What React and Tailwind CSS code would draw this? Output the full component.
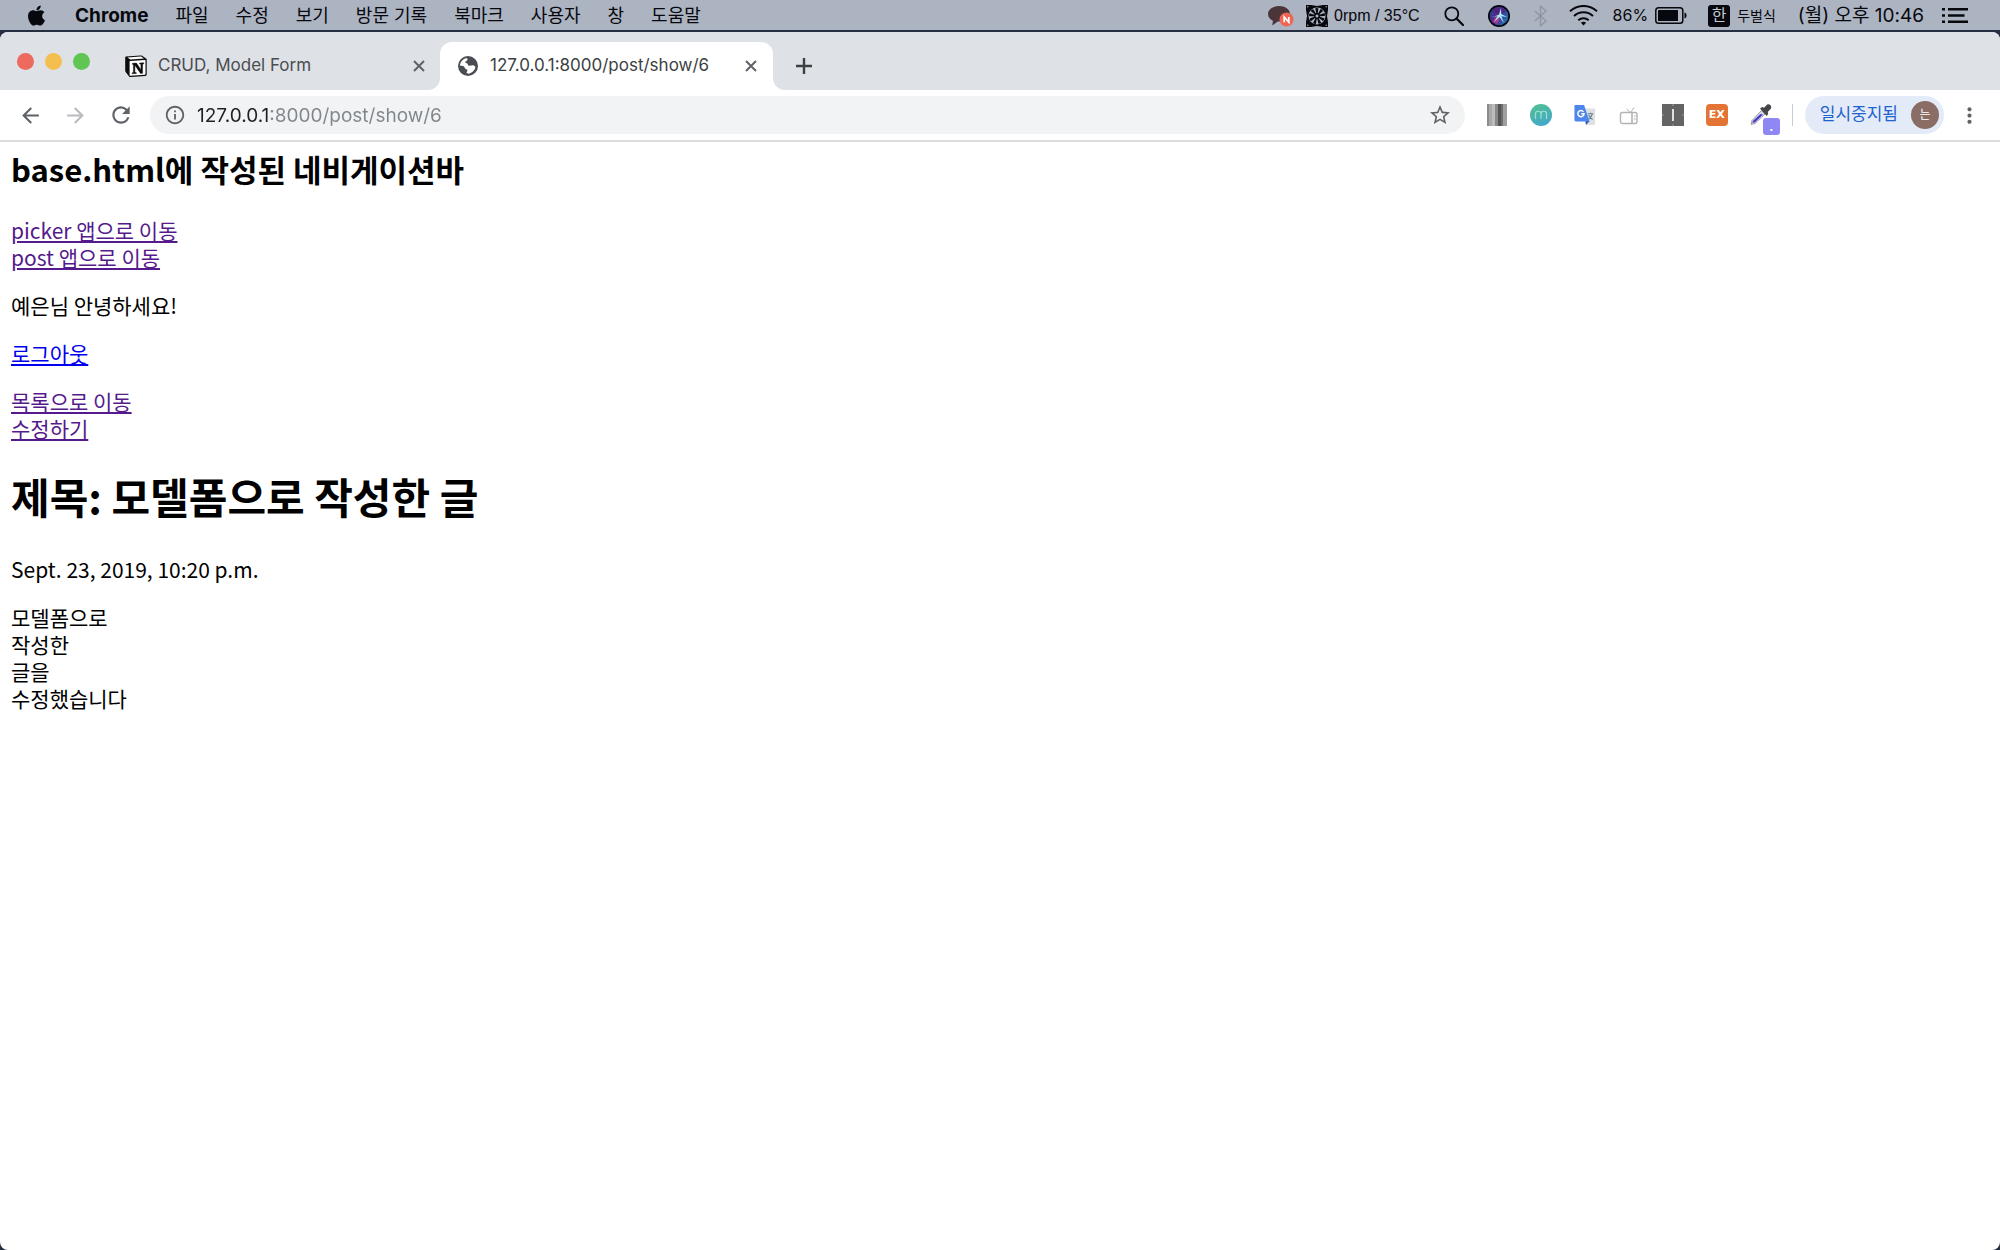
import { FaApple } from "react-icons/fa";
import { MdArrowBack, MdArrowForward, MdRefresh, MdInfoOutline, MdStarBorder, MdMoreVert } from "react-icons/md";

const UI = "font-[Inter,'Noto_Sans_CJK_KR',sans-serif]";
const menus = ["파일", "수정", "보기", "방문 기록", "북마크", "사용자", "창", "도움말"];

function KakaoIcon() {
  return (
    <svg width="26" height="22" viewBox="0 0 26 22" aria-hidden="true">
      <path d="M11 1C5 1 0 4.400 0 9c0 3 1.900 5.300 4.900 6.700L4.300 20.500l5.500-4H11c6 0 11-3.300 11-7.700S17 1 11 1z" fill="#4c3539" />
      <circle cx="18.500" cy="14.500" r="7" fill="#ee6553" />
      <path d="M16.200 17.200v-5.200l4.600 5.200v-5.200" stroke="#fff" strokeWidth="1.700" fill="none" />
    </svg>
  );
}

function FanIcon() {
  const blades = [0, 40, 80, 120, 160, 200, 240, 280, 320];
  return (
    <svg width="22" height="22" viewBox="0 0 22 22" aria-hidden="true">
      <path d="M0 0h5l6 1 6-1h5v5l-1 6 1 6v5h-5l-6-1-6 1H0v-5l1-6-1-6z" fill="#07080d" />
      <circle cx="11" cy="11" r="8.500" fill="#b0b6c3" />
      {blades.map((a) => (
        <path key={a} d="M10.400 9 L9.300 3.200 Q11 2.600 12.400 3.400 L11.600 9z" fill="#07080d" transform={`rotate(${a} 11 11)`} />
      ))}
      <circle cx="11" cy="11" r="3" fill="#07080d" />
      <circle cx="11" cy="11" r="1.500" fill="#b0b6c3" />
      <circle cx="1.800" cy="1.800" r="0.700" fill="#aab0bd" />
      <circle cx="20.200" cy="1.800" r="0.700" fill="#aab0bd" />
      <circle cx="1.800" cy="20.200" r="0.700" fill="#aab0bd" />
      <circle cx="20.200" cy="20.200" r="0.700" fill="#aab0bd" />
    </svg>
  );
}

function SearchIcon() {
  return (
    <svg width="20" height="20" viewBox="0 0 20 20" aria-hidden="true">
      <circle cx="7.800" cy="7.800" r="6.500" fill="none" stroke="#07080d" strokeWidth="1.800" />
      <path d="M12.500 12.500 19 19" stroke="#07080d" strokeWidth="2.200" strokeLinecap="round" />
    </svg>
  );
}

function SiriIcon() {
  return (
    <svg width="22" height="22" viewBox="0 0 22 22" aria-hidden="true">
      <defs>
        <linearGradient id="siri" x1="0" y1="0.200" x2="1" y2="0.800">
          <stop offset="0" stopColor="#174a8c" />
          <stop offset="0.350" stopColor="#5a2a8c" />
          <stop offset="0.600" stopColor="#3a3f9e" />
          <stop offset="1" stopColor="#1f7fa6" />
        </linearGradient>
      </defs>
      <circle cx="11" cy="11" r="11" fill="#05060f" />
      <circle cx="11" cy="11" r="9.300" fill="url(#siri)" />
      <path d="M4 5c5-4 11-3 14 1l-7 5z" fill="#4b1f7a" opacity="0.700" />
      <path d="M5 17c1-4 3-6 6-6 1 3 0 6-2 8z" fill="#c13a90" opacity="0.800" />
      <path d="M3 12c4-.8 6-1.200 8-2.500L13 3l.3 6 5.700 3-5.600-.8 2.600 6.800-4.500-6-5.500 5 3.500-5.800z" fill="#a8e9f5" />
    </svg>
  );
}

function BluetoothIcon() {
  return (
    <svg width="14" height="22" viewBox="0 0 14 22" aria-hidden="true">
      <path d="M1 6l11 10-5.500 5V1L12 6 1 16" fill="none" stroke="#8d939f" strokeWidth="1.200" />
    </svg>
  );
}

function WifiIcon() {
  return (
    <svg width="29" height="21" viewBox="0 0 29 21" fill="none" stroke="#07080d" strokeWidth="2" aria-hidden="true">
      <path d="M1 6.300C9-.8 20-.8 28 6.300M5 11c5.500-5 13.500-5 19 0M9.300 15.300c3-2.700 7.400-2.700 10.400 0" />
      <path d="M14.500 20.500l-2.600-2.800c1.500-1.300 3.700-1.300 5.200 0z" fill="#07080d" stroke="none" />
    </svg>
  );
}

function BatteryIcon() {
  return (
    <svg width="32" height="17" viewBox="0 0 32 17" aria-hidden="true">
      <rect x="0.800" y="0.800" width="27" height="15.400" rx="2.800" fill="none" stroke="#07080d" strokeWidth="1.500" />
      <rect x="3" y="3" width="20" height="11" rx="0.600" fill="#07080d" />
      <path d="M29.500 5.500c1.600.5 2 1.600 2 3s-.4 2.500-2 3z" fill="#07080d" />
    </svg>
  );
}

function ListIcon() {
  return (
    <svg width="26" height="15" viewBox="0 0 26 15" fill="#07080d" aria-hidden="true">
      <path d="M0 0h3v2.400H0zM0 6.300h3v2.400H0zM0 12.600h3V15H0zM6 0h20v2.400H6zM6 6.300h16.500v2.400H6zM6 12.600h20V15H6z" />
    </svg>
  );
}

function NotionIcon() {
  return (
    <svg width="22" height="22" viewBox="0 0 22 22" aria-hidden="true">
      <path d="M.8 1.500 15.500.5c.8 0 1.300.1 2 .6l3.500 2.500c.6.400.7.700.7 1.400v14.500c0 .9-.4 1.400-1.400 1.500l-14.600 1c-.8 0-1.300-.1-1.800-.8L1 17.500c-.5-.7-.8-1.200-.8-2V3c0-.8.2-1.400.6-1.500z" fill="#0b0b0b" />
      <path d="M2.500 2.500 15.400 1.600c.6 0 .9 0 1.400.4L19 3.500 5.300 4.400z" fill="#fff" />
      <path d="M5 5.900 19.800 5c.5 0 .7.200.7.700v13.200c0 .5-.2.800-.8.900L5.500 20.700c-.6 0-.9-.2-.9-.8V6.600c0-.4.100-.7.400-.7z" fill="#fff" />
      <path d="M7.500 8.300l4-.2 4.400 6.600V9.300l-1.300-.2V8l4.200-.2v1l-1.200.4v9.100l-2 .3-5.700-8.300v7.000l1.400.300v1l-4.200.2v-1l1.300-.4V9.500l-1.100-.2z" fill="#0b0b0b" stroke="#0b0b0b" strokeWidth="0.400" />
    </svg>
  );
}

function GlobeIcon() {
  return (
    <svg width="20" height="20" viewBox="0 0 20 20" aria-hidden="true">
      <circle cx="10" cy="10" r="10" fill="#4a4e53" />
      <path d="M8.200 2.200c1.700 0 1.500 1.200 1 2-.5.900-1.900.9-1.900 2 0 1 1.300.9 2 1.300.9.600.2 1.700 1.500 2.200 1.500.5 2.700-.6 4-.4 1.500.2 2.600 1.200 2.600 2.200-.9 3-3.400 5.500-6.600 6.200-1 .2-2.200-.1-2.200-1.100 0-1 .9-1.300.8-2.300-.1-1-1.300-1-2.100-1.600-.8-.600-.6-1.900-1.600-2.400C4.600 9.800 3.200 9.900 2 9.700 2.100 6 4.600 2.900 8.200 2.200z" fill="#fff" />
    </svg>
  );
}

function CloseIcon() {
  return (
    <svg width="12" height="12" viewBox="0 0 12 12" stroke="#5f6368" strokeWidth="2" aria-hidden="true">
      <path d="M1 1l10 10M11 1 1 11" />
    </svg>
  );
}

function PlusIcon() {
  return (
    <svg width="18" height="18" viewBox="0 0 18 18" stroke="#3c4043" strokeWidth="2.400" aria-hidden="true">
      <path d="M9 1v16M1 9h16" />
    </svg>
  );
}

function BarcodeIcon() {
  return (
    <svg width="22" height="22" viewBox="0 0 22 22" aria-hidden="true">
      <rect x="1" width="2" height="22" fill="#8b8b8b" />
      <rect x="3" width="3" height="22" fill="#a9a9a9" />
      <rect x="6" width="3" height="22" fill="#bdbdbd" />
      <rect x="9" width="3" height="22" fill="#8a8a8a" />
      <rect x="12" width="3" height="22" fill="#555" />
      <rect x="15" width="2" height="22" fill="#6f6f6f" />
      <rect x="17" width="4" height="22" fill="#a0a0a0" />
    </svg>
  );
}

function MomentumIcon() {
  return (
    <svg width="22" height="22" viewBox="0 0 22 22" aria-hidden="true">
      <defs>
        <linearGradient id="mint" x1="0.300" y1="0" x2="0.700" y2="1">
          <stop offset="0" stopColor="#50bf93" />
          <stop offset="1" stopColor="#43a7cb" />
        </linearGradient>
      </defs>
      <circle cx="11" cy="11" r="11" fill="url(#mint)" />
      <path d="M5.500 15V9.500c0-3 5.500-3 5.500 0V15M11 9.500c0-3 5.500-3 5.500 0V15" fill="none" stroke="#9fe0d4" strokeWidth="1.200" />
    </svg>
  );
}

function TranslateIcon() {
  return (
    <svg width="24" height="22" viewBox="0 0 24 22" aria-hidden="true">
      <path d="M10 4h12c.6 0 1 .4 1 1v16c0 .6-.4 1-1 1h-9z" fill="#dfe0e2" />
      <path d="M12.500 17.500h4.500L13 22z" fill="#2b53b8" />
      <path d="M1 0h10l6 18H2c-1 0-1.500-.5-1.500-1.500V1z" fill="#4f86ec" />
      <path d="M10.300 7.400A3.400 3.400 0 1 0 11 9.700H7.900" fill="none" stroke="#fff" strokeWidth="1.600" />
      <path d="M15 9.700h6M18 8.500v1.200M20 9.700c-.6 2.600-2.400 4.600-4 6M16 11c1 2.300 2.600 4 4.300 5" fill="none" stroke="#61809a" strokeWidth="1.200" />
    </svg>
  );
}

function TvIcon() {
  return (
    <svg width="20" height="20" viewBox="0 0 20 20" fill="none" stroke="#b3b3b3" strokeWidth="1.400" aria-hidden="true">
      <rect x="1.500" y="7.500" width="16.500" height="11" rx="2" />
      <path d="M13 8v10.500" strokeWidth="1.600" />
      <path d="M7.500 4l4 3.500L15 2.500M14.800 11h2M14.800 14h2" strokeWidth="1" />
    </svg>
  );
}

function BarIcon() {
  return (
    <svg width="22" height="22" viewBox="0 0 22 22" aria-hidden="true">
      <rect width="22" height="22" fill="#646464" />
      <path d="M11 5v12" stroke="#fff" strokeWidth="1.600" />
      <path d="M11 0v2M11 20v2M0 11h2M20 11h2" stroke="#9a9a9a" strokeWidth="1" />
    </svg>
  );
}

function DropperIcon() {
  return (
    <svg width="22" height="22" viewBox="0 0 22 22" aria-hidden="true">
      <path d="M1 20.500l1-4L11.500 6.500l3.500 3.500L5 19.500z" fill="#d7d8e4" stroke="#8a8a90" strokeWidth="0.800" />
      <path d="M2.300 19 3.200 16.800l7.300-6.800 2.500.5L5 18.300z" fill="#4338c9" />
      <path d="M10 4.500l2.200-1.500 1.800.7L17 .8c1.800-1.500 5.500.7 3.800 4L17.700 8l.6 1.700-1.600 2.300z" fill="#444548" />
    </svg>
  );
}

function Tab({ icon, title, active }) {
  return (
    <div className={active ? "flex w-[333px] items-center rounded-t-xl bg-white pr-4 pl-[18px]" : "flex w-[325px] items-center pr-[15px] pl-[10px]"}>
      {icon}
      <button type="button" role="tab" aria-selected={active} className={active ? "ml-3 flex-1 text-left text-[#3c4043]" : "ml-[11px] flex-1 text-left text-[#4a4d51]"}>
        {title}
      </button>
      <button type="button" aria-label="탭 닫기">
        <CloseIcon />
      </button>
    </div>
  );
}

function PageLink({ children, fresh }) {
  return (
    <a href="#" className={fresh ? "text-[#0000ee] underline underline-offset-2" : "text-[#551a8b] underline underline-offset-2"}>
      {children}
    </a>
  );
}

export default function App() {
  return (
    <div className={`flex min-h-screen flex-col bg-[#262e42] text-[#07080d] ${UI}`}>
      <header className="flex h-[30px] items-center justify-between bg-[#acb3c1] pt-px pr-8 pl-[25px] text-[18px] leading-[29px]">
        <nav className="flex items-center gap-[27px]">
          <button type="button" aria-label="Apple">
            <FaApple size={23} />
          </button>
          <button type="button" className="text-[19px] font-bold">Chrome</button>
          {menus.map((m) => (
            <button key={m} type="button">{m}</button>
          ))}
        </nav>
        <div className="flex items-center">
          <KakaoIcon />
          <div className="ml-3 flex items-center gap-[6px] font-['Liberation_Sans',sans-serif] text-[16px]">
            <FanIcon />
            <span>0rpm / 35°C</span>
          </div>
          <div className="ml-6 flex items-center gap-6">
            <SearchIcon />
            <SiriIcon />
            <BluetoothIcon />
          </div>
          <div className="ml-[21px] flex items-center gap-[15px] text-[16px]">
            <WifiIcon />
            <div className="flex items-center gap-[7px]">
              <span>86%</span>
              <BatteryIcon />
            </div>
          </div>
          <div className="ml-[21px] flex items-center gap-[7px] text-[14px]">
            <span className="flex size-[22px] items-center justify-center rounded-[3px] bg-[#07080d] text-[16px] text-[#c3c8d2]">한</span>
            <span>두벌식</span>
          </div>
          <span className="ml-[22px] text-[19px]">(월) 오후 10:46</span>
          <button type="button" aria-label="알림 센터" className="ml-[18px]">
            <ListIcon />
          </button>
        </div>
      </header>

      <div className="mt-[2px] flex flex-1 flex-col overflow-hidden rounded-lg bg-white">
        <div className="flex h-[58px] text-[17px]">
          <div className="flex rounded-br-xl bg-[#dee1e6] pt-[10px]">
            <div className="flex w-[115px] gap-[11px] pt-[11px] pl-[17px]">
              <button type="button" aria-label="닫기" className="size-[17px] rounded-full bg-[#ed6a5e]" />
              <button type="button" aria-label="최소화" className="size-[17px] rounded-full bg-[#f5bf4f]" />
              <button type="button" aria-label="전체 화면" className="size-[17px] rounded-full bg-[#61c554]" />
            </div>
            <Tab icon={<NotionIcon />} title="CRUD, Model Form" active={false} />
          </div>
          <div className="flex bg-[#dee1e6] pt-[10px]">
            <Tab icon={<GlobeIcon />} title="127.0.0.1:8000/post/show/6" active />
          </div>
          <div className="flex flex-1 items-center rounded-bl-xl bg-[#dee1e6] pt-[10px] pl-[22px]">
            <button type="button" aria-label="새 탭">
              <PlusIcon />
            </button>
          </div>
        </div>

        <div className="flex h-[52px] items-center border-b-2 border-[#dcdcdc] pr-[18px] pl-[18px] text-[#5f6368]">
          <div className="flex items-center gap-5">
            <button type="button" aria-label="뒤로"><MdArrowBack size={25} /></button>
            <button type="button" aria-label="앞으로" className="text-[#b9bbbe]"><MdArrowForward size={25} /></button>
            <button type="button" aria-label="새로고침"><MdRefresh size={26} /></button>
          </div>
          <div className="ml-4 flex h-[38px] flex-1 items-center rounded-full bg-[#f1f3f4] pr-[13px] pl-[14px]">
            <MdInfoOutline size={22} />
            <input
              type="text"
              aria-label="주소"
              defaultValue="127.0.0.1:8000/post/show/6"
              className="ml-[11px] h-8 min-w-0 flex-1 bg-[linear-gradient(90deg,#202124_73px,#80868b_73px)] bg-clip-text text-[19px] text-transparent outline-none"
            />
            <button type="button" aria-label="북마크 추가"><MdStarBorder size={24} /></button>
          </div>
          <div className="ml-[21px] flex items-center gap-[22px]">
            <button type="button" aria-label="Barcode" className="flex w-[22px] justify-center"><BarcodeIcon /></button>
            <button type="button" aria-label="Momentum" className="flex w-[22px] justify-center"><MomentumIcon /></button>
            <button type="button" aria-label="번역" className="flex w-[22px] justify-center"><TranslateIcon /></button>
            <button type="button" aria-label="TV" className="flex w-[22px] justify-center"><TvIcon /></button>
            <button type="button" aria-label="Bar" className="flex w-[22px] justify-center"><BarIcon /></button>
            <button type="button" className="flex size-[22px] items-center justify-center rounded-[4px] bg-[#e37433] font-['DejaVu_Sans',sans-serif] text-[11px] font-bold text-white">EX</button>
            <button type="button" aria-label="색상 추출" className="relative w-[22px]">
              <DropperIcon />
              <span className="absolute top-[14px] left-[13px] flex size-[17px] items-center justify-center rounded-[3px] bg-[#8f87f3] text-[12px] leading-none font-bold text-white">.</span>
            </button>
          </div>
          <div className="ml-5 h-[22px] w-px bg-[#c9cbce]" />
          <button type="button" className="ml-3 flex h-[38px] items-center gap-[13px] rounded-full bg-[#e3ebf8] pr-[5px] pl-[15px] text-[17px] text-[#1f62d0]">
            <span>일시중지됨</span>
            <span className="flex size-7 items-center justify-center rounded-full bg-[#8a6d64] text-[12px] text-white">는</span>
          </button>
          <button type="button" aria-label="더보기" className="ml-[13px]"><MdMoreVert size={25} /></button>
        </div>

        <main className="flex-1 px-[11px] pt-[6px] font-['Noto_Sans_CJK_KR',sans-serif] text-[21px] leading-[27px] text-black">
          <h2 className="mb-[27px] text-[31px] leading-[42px] font-bold">base.html에 작성된 네비게이션바</h2>
          <nav className="mb-[21px] flex flex-col items-start">
            <PageLink>picker 앱으로 이동</PageLink>
            <PageLink>post 앱으로 이동</PageLink>
          </nav>
          <p className="mb-[21px]">예은님 안녕하세요!</p>
          <p className="mb-[21px]"><PageLink fresh>로그아웃</PageLink></p>
          <nav className="mb-[24px] flex flex-col items-start">
            <PageLink>목록으로 이동</PageLink>
            <PageLink>수정하기</PageLink>
          </nav>
          <h1 className="mb-[30px] text-[42px] leading-[60px] font-bold">제목: 모델폼으로 작성한 글</h1>
          <p className="mb-[21px]">Sept. 23, 2019, 10:20 p.m.</p>
          <p>
            모델폼으로<br />작성한<br />글을<br />수정했습니다
          </p>
        </main>
      </div>
    </div>
  );
}
